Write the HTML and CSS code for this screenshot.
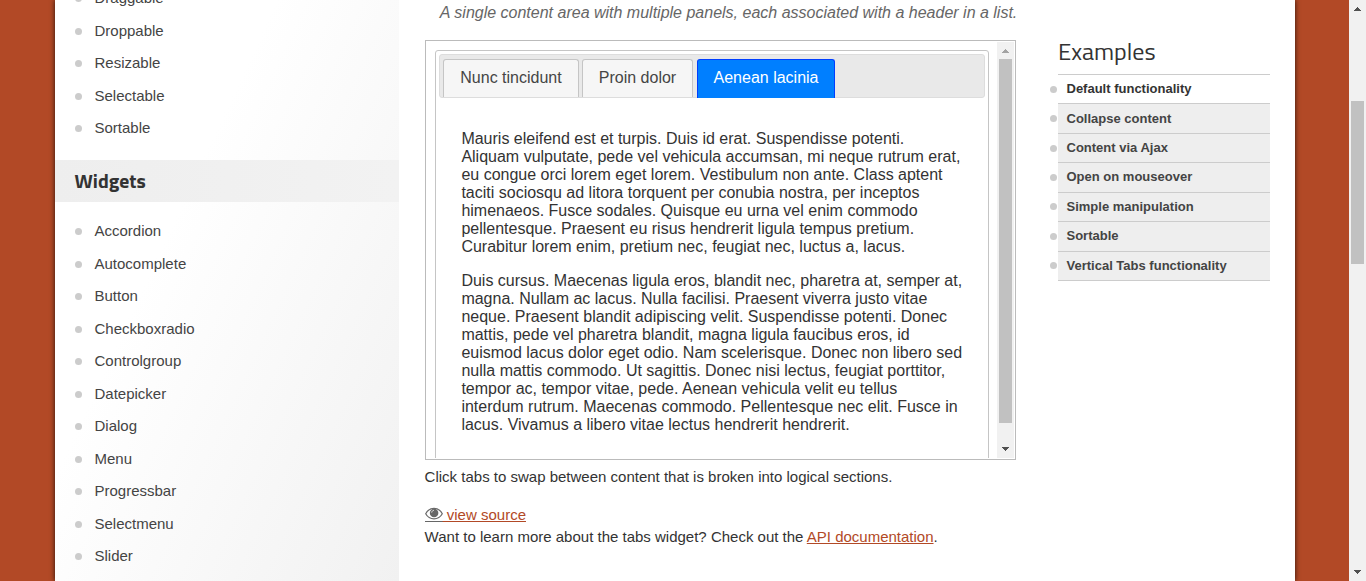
FILE: index.html
```html
<!DOCTYPE html>
<html lang="en">
<head>
<meta charset="utf-8">
<title>Tabs | jQuery UI</title>
<link rel="stylesheet" href="styles.css">
</head>
<body>
<div class="window">
  <div class="viewport">
    <div class="container">
      <aside class="sidebar">
        <ul class="menu menu-first">
          <li>Draggable</li>
          <li>Droppable</li>
          <li>Resizable</li>
          <li>Selectable</li>
          <li>Sortable</li>
        </ul>
        <h3 class="menu-title">Widgets</h3>
        <ul class="menu">
          <li>Accordion</li>
          <li>Autocomplete</li>
          <li>Button</li>
          <li>Checkboxradio</li>
          <li>Controlgroup</li>
          <li>Datepicker</li>
          <li>Dialog</li>
          <li>Menu</li>
          <li>Progressbar</li>
          <li>Selectmenu</li>
          <li>Slider</li>
        </ul>
      </aside>
      <main class="content">
        <p class="desc">A single content area with multiple panels, each associated with a header in a list.</p>
        <div class="frame">
          <div class="frame-body">
            <div class="tabs">
              <ul class="tabs-nav">
                <li class="tab tab-1">Nunc tincidunt</li>
                <li class="tab tab-2">Proin dolor</li>
                <li class="tab tab-active">Aenean lacinia</li>
              </ul>
              <div class="panel">
                <p>Mauris eleifend est et turpis. Duis id erat. Suspendisse potenti. Aliquam vulputate, pede vel vehicula accumsan, mi neque rutrum erat, eu congue orci lorem eget lorem. Vestibulum non ante. Class aptent taciti sociosqu ad litora torquent per conubia nostra, per inceptos himenaeos. Fusce sodales. Quisque eu urna vel enim commodo pellentesque. Praesent eu risus hendrerit ligula tempus pretium. Curabitur lorem enim, pretium nec, feugiat nec, luctus a, lacus.</p>
                <p>Duis cursus. Maecenas ligula eros, blandit nec, pharetra at, semper at, magna. Nullam ac lacus. Nulla facilisi. Praesent viverra justo vitae neque. Praesent blandit adipiscing velit. Suspendisse potenti. Donec mattis, pede vel pharetra blandit, magna ligula faucibus eros, id euismod lacus dolor eget odio. Nam scelerisque. Donec non libero sed nulla mattis commodo. Ut sagittis. Donec nisi lectus, feugiat porttitor, tempor ac, tempor vitae, pede. Aenean vehicula velit eu tellus interdum rutrum. Maecenas commodo. Pellentesque nec elit. Fusce in lacus. Vivamus a libero vitae lectus hendrerit hendrerit.</p>
              </div>
            </div>
          </div>
          <div class="scroll">
            <svg class="arrow" width="17" height="17" shape-rendering="crispEdges"><path d="M8 7h1v1h1v1h1v1h1v1H5v-1h1V9h1V8h1z" fill="#a3a3a3"/></svg>
            <div class="thumb thumb-frame"></div>
            <svg class="arrow arrow-end" width="17" height="17" shape-rendering="crispEdges"><path d="M5 6h7v1h-1v1h-1v1H9v1H8V9H7V8H6V7H5z" fill="#505050"/></svg>
          </div>
        </div>
        <p class="note">Click tabs to swap between content that is broken into logical sections.</p>
        <p class="source"><a class="source-link"><svg class="eye" width="18" height="16" viewBox="0 0 18 16"><path d="M.7 6.700C2.600 3.300 5.600 1.400 9 1.400s6.400 1.900 8.300 5.300C15.400 10.100 12.400 11.800 9 11.800S2.600 10.100 .7 6.700z" fill="#fff" stroke="#6a6a6a" stroke-width="1.200"/><circle cx="9.100" cy="6" r="4.300" fill="#666"/><path d="M6.700 5.600c.1-1.400 1-2.200 2.300-2.300" fill="none" stroke="#ddd" stroke-width="1"/><path d="M0 14.500h18" stroke="#666"/></svg> view source</a></p>
        <p class="more">Want to learn more about the tabs widget? Check out the <a>API documentation</a>.</p>
      </main>
      <aside class="examples">
        <h2>Examples</h2>
        <ul class="example-list">
          <li class="current">Default functionality</li>
          <li>Collapse content</li>
          <li>Content via Ajax</li>
          <li>Open on mouseover</li>
          <li>Simple manipulation</li>
          <li>Sortable</li>
          <li>Vertical Tabs functionality</li>
        </ul>
      </aside>
    </div>
  </div>
  <div class="scroll">
    <svg class="arrow" width="17" height="17" shape-rendering="crispEdges"><path d="M8 7h1v1h1v1h1v1h1v1H5v-1h1V9h1V8h1z" fill="#505050"/></svg>
    <div class="thumb thumb-page"></div>
    <svg class="arrow arrow-end" width="17" height="17" shape-rendering="crispEdges"><path d="M5 6h7v1h-1v1h-1v1H9v1H8V9H7V8H6V7H5z" fill="#505050"/></svg>
  </div>
</div>
</body>
</html>
```

FILE: styles.css
```css
* { box-sizing: border-box; }
body {
  margin: 0;
  overflow: hidden;
  font: 15px/22px Arial, "Liberation Sans", sans-serif;
  color: #333;
}
ul { list-style: none; margin: 0; padding: 0; }
p, h2, h3 { margin: 0; }
a { color: #b24926; text-decoration: underline; }

.window { display: flex; height: 581px; overflow: hidden; }
.viewport { flex: 1; padding: 0 54px 0 55px; background: #b24926; overflow: hidden; }
.container {
  display: flex;
  width: 1240px;
  height: 100%;
  background: #fff;
  box-shadow: 0 0 5px rgba(0, 0, 0, .8);
}

.sidebar {
  width: 344px;
  overflow: hidden;
  background: linear-gradient(115deg, #fff 36%, #f1f1f1 100%);
}
.menu { padding: 13px 0 0 19.500px; }
.menu-first { padding-top: 0; margin-top: -18px; height: 178px; }
.menu li {
  display: flex;
  align-items: center;
  height: 32.5px;
  color: #444;
}
.menu li::before {
  content: "";
  width: 7px;
  height: 7px;
  margin: 1px 13px 0 0;
  border-radius: 50%;
  background: #ccc;
}
.menu-title {
  height: 42px;
  padding-left: 19.500px;
  background: linear-gradient(90deg, #eeeeee, #f2f2f2);
  font: bold 19.700px/42px "Titillium Web", "Noto Sans", sans-serif;
  color: #333;
}

.content { width: 591px; margin-left: 26px; }
.desc {
  height: 40px;
  padding: 1px 0 0 14.800px;
  font-size: 16px;
  font-style: italic;
  line-height: 23px;
  color: #666;
  white-space: nowrap;
}
.frame {
  display: flex;
  height: 420px;
  padding: 1px;
  border: 1px solid #bbb;
}
.frame-body { flex: 1; padding: 8px; overflow: hidden; }
.tabs {
  width: 554px;
  height: 460px;
  padding: 3px;
  border: 1px solid #c5c5c5;
  border-radius: 3px;
  font-size: 16px;
  line-height: 18px;
}
.tabs-nav {
  display: flex;
  height: 44px;
  padding: 4px 3px 0;
  border: 1px solid #ddd;
  border-radius: 3px;
  background: #e9e9e9;
}
.tab {
  height: 38px;
  margin-right: 3px;
  border: 1px solid #c5c5c5;
  border-bottom: 0;
  border-radius: 3px 3px 0 0;
  background: #f6f6f6;
  color: #454545;
  line-height: 35px;
  text-align: center;
}
.tab-1 { width: 136px; }
.tab-2 { width: 111px; margin-right: 4px; }
.tab-active {
  width: 138px;
  height: 39px;
  border-color: #003eff;
  background: #007fff;
  color: #fff;
}
.panel { width: 546px; padding: 32px 22px 0 22.400px; }
.panel p { margin-bottom: 16px; }

.scroll { display: flex; flex-direction: column; width: 17px; background: #f1f1f1; }
.arrow { display: block; flex: none; }
.arrow-end { margin-top: auto; }
.thumb { width: 13px; margin-left: 2px; background: #c1c1c1; }
.thumb-frame { height: 364px; }
.thumb-page { height: 163px; margin-top: 84px; }

.note { margin: 6px 0 0 -.4px; white-space: nowrap; }
.source { margin: 16px 0 0 -.4px; }
.source-link { display: inline-block; }
.eye { vertical-align: -3px; }
.more { margin-left: -.4px; white-space: nowrap; }

.examples { width: 212px; margin-left: 42px; }
.examples h2 {
  height: 74px;
  padding-top: 33px;
  font: 400 24px/36px "Titillium Web", "Noto Sans", sans-serif;
  color: #333;
}
.example-list { border-top: 1px solid #ccc; }
.example-list li {
  display: flex;
  align-items: center;
  height: 29.430px;
  border-bottom: 1px solid #ccc;
  background: #eee;
  font-size: 13px;
  font-weight: bold;
  color: #444;
}
.example-list .current { background: #fff; color: #333; }
.example-list li::before {
  content: "";
  width: 7px;
  height: 7px;
  margin: 0 9.500px 0 -8px;
  border-radius: 50%;
  background: #ccc;
}
```
